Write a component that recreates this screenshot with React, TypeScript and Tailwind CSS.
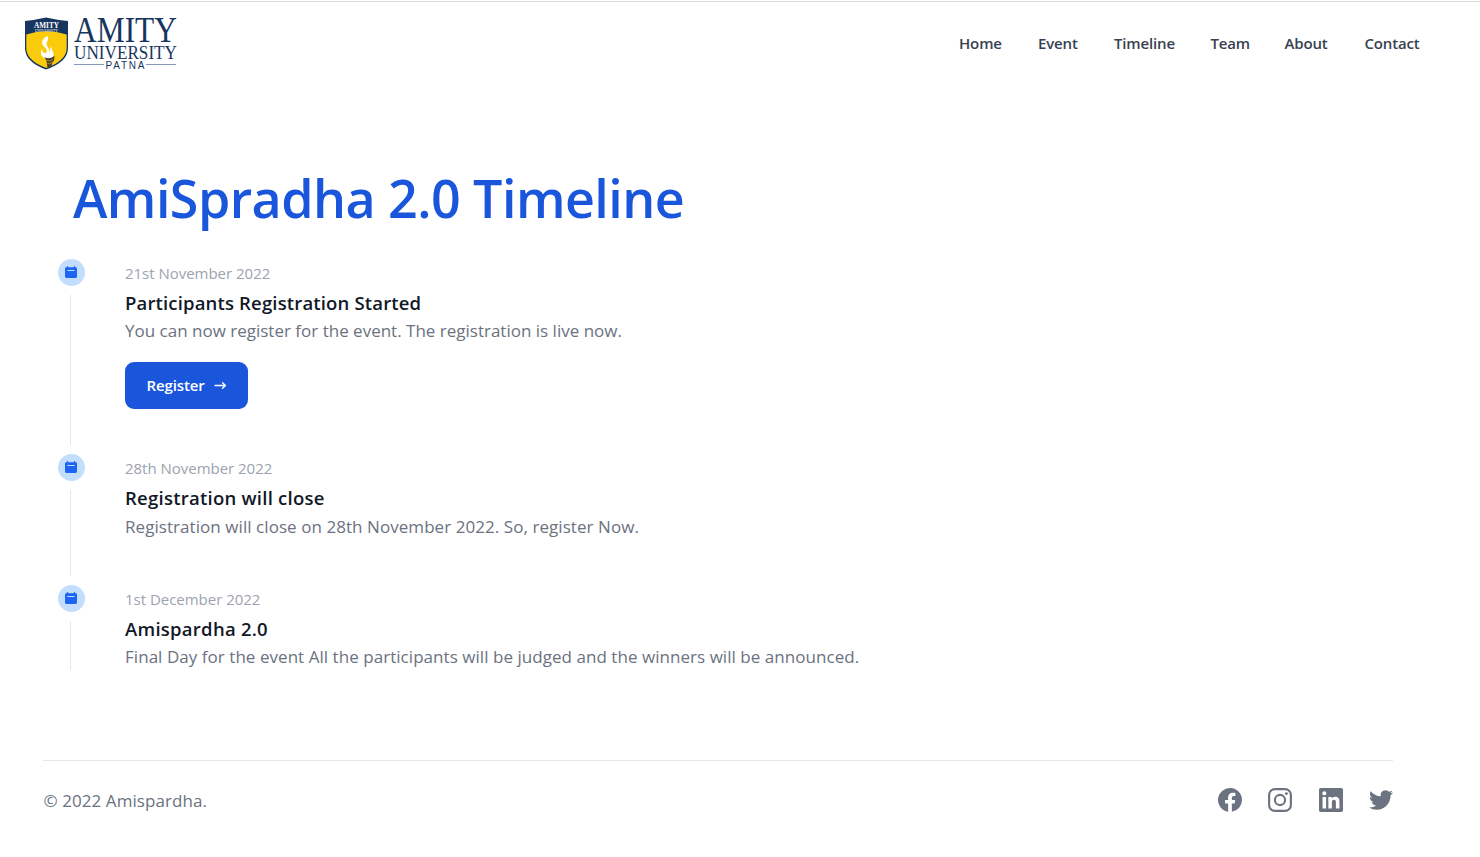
import React from "react";

const navItems = [
  { label: "Home", cls: "w-[43px]" },
  { label: "Event", cls: "w-[40px]" },
  { label: "Timeline", cls: "w-[60.5px]" },
  { label: "Team", cls: "w-[38px]" },
  { label: "About", cls: "w-[44px]" },
  { label: "Contact", cls: "w-[55.5px]" },
];

function Logo() {
  return (
    <svg width="156" height="56" viewBox="0 0 156 56" overflow="visible" aria-label="Amity University Patna">
      <path d="M2 5Q12 4 23 1.5Q34 4 45 5V32Q45 46 23 53.500Q2 46 2 32Z" fill="#17365f" />
      <path d="M3.300 18.500Q23 12 43.700 18.500V32Q43.500 44.500 23.300 52Q3.300 44.500 3.300 32Z" fill="#f9cb0b" />
      <path d="M24.500 20C18 23 17.500 28 22 31.500C25 34 24 38 21.500 37C18.500 35.500 19 33.500 19.500 32.500C17 35 17.500 39 20.500 41.500C23 44 29 43.500 30.500 40C31.500 36 28 34 28.500 30.500C26.500 32 27.500 35 26.500 37C27 33 24 31 23.500 28C23.500 25 26.500 24 24.500 20Z" fill="#fff" />
      <path d="M21.500 41Q26 44 31.500 40L31 45L29.500 46L28.500 50.500L24.500 52L23.500 45Z" fill="#493f2d" />
      <path d="M23.500 44.500Q27 46 30 43.500M24.500 47.500Q27 48.500 29 46.500" stroke="#d5ad18" strokeWidth=".7" fill="none" />
      <text x="11" y="12" textLength="25" lengthAdjust="spacingAndGlyphs" fontFamily="Liberation Serif, serif" fontSize="8" fontWeight="700" fill="#fff">AMITY</text>
      <text x="12" y="15.500" textLength="23" lengthAdjust="spacingAndGlyphs" fontFamily="Liberation Serif, serif" fontSize="4" fill="#fff">UNIVERSITY</text>
      <g fill="#17365f" fontFamily="Liberation Serif, serif">
        <text x="51" y="26" textLength="103" lengthAdjust="spacingAndGlyphs" fontSize="35">AMITY</text>
        <text x="51" y="43" textLength="103" lengthAdjust="spacingAndGlyphs" fontSize="18.500">UNIVERSITY</text>
        <text x="82.500" y="52.500" textLength="39" fontFamily="Liberation Sans, sans-serif" fontSize="10">PATNA</text>
      </g>
      <path d="M51 48.500H81M123 48.500H153" stroke="#8298b4" />
    </svg>
  );
}

function Marker() {
  return (
    <div className="mr-[40px] flex w-[27px] shrink-0 flex-col items-center">
      <div className="flex size-[27px] shrink-0 items-center justify-center rounded-full bg-[#c3ddfd]">
        <svg width="13" height="13" viewBox="0 0 13 13" className="mr-px">
          <path d="M2.500 .7V2M9.500 .7V2" stroke="#1c64f2" strokeWidth="1.300" strokeLinecap="round" />
          <rect x="0" y="1.300" width="12" height="10.700" rx="1.400" fill="#1c64f2" />
          <path d="M2.800 4.500H9.200" stroke="#c3ddfd" strokeWidth="1.200" strokeLinecap="round" />
        </svg>
      </div>
      <div className="my-[9px] mr-[2px] w-px flex-1 bg-[#e5e7eb]" />
    </div>
  );
}

type EventProps = {
  date: string;
  title: string;
  text: string;
  height: string;
  titleCls: string;
  textCls: string;
  children?: React.ReactNode;
};

function TimelineItem({ date, title, text, height, titleCls, textCls, children }: EventProps) {
  return (
    <li className={`flex ${height}`}>
      <Marker />
      <div className="whitespace-nowrap">
        <time className="block h-[29px] text-[15px] leading-[29px] tracking-[-0.02px] text-[#9ca3af]">{date}</time>
        <h2 className={`h-[29px] text-[18.5px] leading-[29px] font-semibold text-[#111827] ${titleCls}`}>{title}</h2>
        <p className={`h-[28px] text-[17px] leading-[28px] text-[#6b7280] ${textCls}`}>{text}</p>
        {children}
      </div>
    </li>
  );
}

export default function App() {
  return (
    <div className="h-[857px] overflow-hidden bg-white pt-px font-['Open_Sans','Noto_Sans',sans-serif]">
      <header className="flex h-[85px] items-center justify-between border-t border-[#dcdcde] pr-[60px] pl-[23px]">
        <Logo />
        <nav className="flex gap-[36px] pb-[2px] text-[15px] font-semibold text-[#374151]">
          {navItems.map((n) => (
            <a key={n.label} href="#" className={`${n.cls} whitespace-nowrap tracking-[-0.15px]`}>{n.label}</a>
          ))}
        </nav>
      </header>
      <main className="pt-[73px] pl-[58px]">
        <h1 className="h-[100px] pl-[15px] text-[52px] leading-[78px] font-semibold tracking-[-0.55px] text-[#1a56db]">AmiSpradha 2.0 Timeline</h1>
        <ol>
          <TimelineItem date="21st November 2022" title="Participants Registration Started" text="You can now register for the event. The registration is live now." height="h-[195px]" titleCls="tracking-[0.16px]" textCls="tracking-[0px]">
            <a href="#" className="mt-[17px] flex h-[47px] w-[123px] items-center rounded-[9px] bg-[#1a56db] pl-[21.5px] text-[15px] font-semibold tracking-[-0.12px] text-white">
              <span className="w-[67.5px]">Register</span>
              <svg width="13" height="11" viewBox="0 0 13 11" fill="none" stroke="white" strokeWidth="1.300" strokeLinecap="round" strokeLinejoin="round">
                <path d="M1 5.500H11.500M8.500 2.800L11.500 5.500L8.500 8.200" />
              </svg>
            </a>
          </TimelineItem>
          <TimelineItem date="28th November 2022" title="Registration will close" text="Registration will close on 28th November 2022. So, register Now." height="h-[131px]" titleCls="tracking-[0.25px]" textCls="pt-px tracking-[0.06px]" />
          <TimelineItem date="1st December 2022" title="Amispardha 2.0" text="Final Day for the event All the participants will be judged and the winners will be announced." height="h-[94px]" titleCls="tracking-[0.26px]" textCls="tracking-[0.045px]" />
        </ol>
      </main>
      <footer className="mt-[81px] mr-[87px] ml-[43px] flex h-[80px] items-center justify-between border-t border-[#e5e7eb] text-[#6b7280]">
        <span className="pl-[0.5px] text-[17px] tracking-[0.07px]">© 2022 Amispardha.</span>
        <div className="flex gap-[26.500px] pb-px">
          <svg width="24" height="24" viewBox="0 0 24 24" fill="currentColor"><path d="M24 12a12 12 0 1 0-13.875 11.854v-8.385H7.078V12h3.047V9.356c0-3.007 1.792-4.668 4.533-4.668 1.312 0 2.686.234 2.686.234v2.953h-1.513c-1.491 0-1.956.925-1.956 1.874V12h3.328l-.532 3.469h-2.796v8.385A12 12 0 0 0 24 12z" /></svg>
          <svg width="24" height="24" viewBox="0 0 24 24" fill="none" stroke="currentColor" strokeWidth="2.150"><rect x="1.100" y="1.100" width="21.800" height="21.800" rx="6" /><circle cx="12" cy="12" r="5.100" /><circle cx="18.400" cy="5.600" r="1.450" fill="currentColor" stroke="none" /></svg>
          <svg width="24" height="24" viewBox="0 0 24 24" fill="currentColor"><path d="M20.447 20.452h-3.554v-5.569c0-1.328-.027-3.037-1.852-3.037-1.853 0-2.136 1.445-2.136 2.939v5.667H9.351V9h3.414v1.561h.046c.477-.9 1.637-1.850 3.370-1.850 3.601 0 4.267 2.370 4.267 5.455v6.286zM5.337 7.433a2.062 2.062 0 1 1 0-4.125 2.062 2.062 0 0 1 0 4.125zm1.782 13.019H3.555V9h3.564v11.452zM22.225 0H1.771C.792 0 0 .774 0 1.729v20.542C0 23.227.792 24 1.771 24h20.451C23.200 24 24 23.227 24 22.271V1.729C24 .774 23.200 0 22.222 0h.003z" /></svg>
          <svg width="24" height="24" viewBox="0 0 24 24" fill="currentColor"><path d="M23.953 4.570a10 10 0 0 1-2.825.775 4.958 4.958 0 0 0 2.163-2.723c-.951.555-2.005.959-3.127 1.184a4.920 4.920 0 0 0-8.384 4.482C7.690 8.095 4.067 6.130 1.640 3.162a4.822 4.822 0 0 0-.666 2.475c0 1.710.870 3.213 2.188 4.096a4.904 4.904 0 0 1-2.228-.616v.060a4.923 4.923 0 0 0 3.946 4.827 4.996 4.996 0 0 1-2.212.085 4.936 4.936 0 0 0 4.604 3.417 9.867 9.867 0 0 1-6.102 2.105c-.390 0-.779-.023-1.170-.067a13.995 13.995 0 0 0 7.557 2.209c9.053 0 13.998-7.496 13.998-13.985 0-.210 0-.420-.015-.630A9.935 9.935 0 0 0 24 4.590z" /></svg>
        </div>
      </footer>
    </div>
  );
}
